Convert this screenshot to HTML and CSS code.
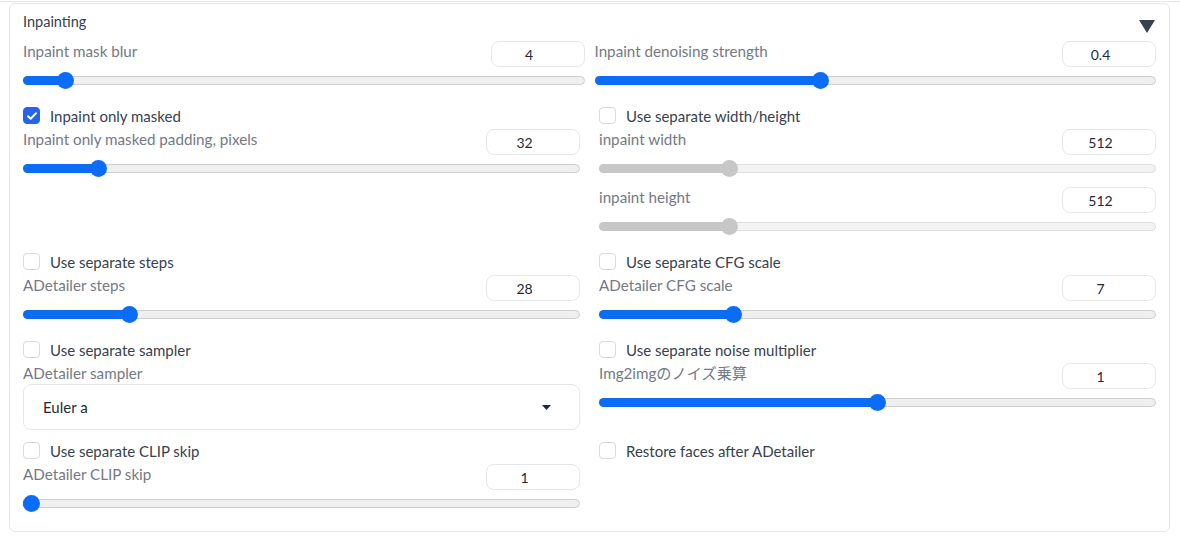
FILE: index.html
```html
<!DOCTYPE html>
<html lang="en">
<head>
<meta charset="utf-8">
<title>Inpainting</title>
<link rel="stylesheet" href="styles.css">
</head>
<body>
<div class="topline"></div>
<section class="panel">
  <div class="header">
    <span class="title">Inpainting</span>
    <svg class="collapse" width="16" height="13" viewBox="0 0 16 13"><polygon points="0,0 16,0 8,13" fill="#374151"/></svg>
  </div>

  <div class="row row-tight">
    <div class="col">
      <div class="slider-block">
        <div class="slider-head"><span class="label">Inpaint mask blur</span><span class="num">4</span></div>
        <div class="range"><div class="track"><div class="fill" style="width:calc(8px + 0.0625 * (100% - 16px))"></div><div class="thumb" style="left:calc(8px + 0.0625 * (100% - 16px))"></div></div></div>
      </div>
    </div>
    <div class="col">
      <div class="slider-block">
        <div class="slider-head"><span class="label">Inpaint denoising strength</span><span class="num">0.4</span></div>
        <div class="range"><div class="track"><div class="fill" style="width:calc(8px + 0.4 * (100% - 16px))"></div><div class="thumb" style="left:calc(8px + 0.4 * (100% - 16px))"></div></div></div>
      </div>
    </div>
  </div>

  <div class="row">
    <div class="col">
      <label class="check"><span class="box checked"><svg width="10" height="8" viewBox="0 0 10 8"><path d="M1 4.2 L3.7 6.8 L9 1.3" fill="none" stroke="#fff" stroke-width="2" stroke-linecap="round" stroke-linejoin="round"/></svg></span><span class="check-text">Inpaint only masked</span></label>
      <div class="slider-block">
        <div class="slider-head"><span class="label">Inpaint only masked padding, pixels</span><span class="num">32</span></div>
        <div class="range"><div class="track"><div class="fill" style="width:calc(8px + 0.125 * (100% - 16px))"></div><div class="thumb" style="left:calc(8px + 0.125 * (100% - 16px))"></div></div></div>
      </div>
    </div>
    <div class="col">
      <label class="check"><span class="box"></span><span class="check-text">Use separate width/height</span></label>
      <div class="slider-block">
        <div class="slider-head"><span class="label">inpaint width</span><span class="num">512</span></div>
        <div class="range disabled"><div class="track"><div class="fill" style="width:calc(8px + 0.2258 * (100% - 16px))"></div><div class="thumb" style="left:calc(8px + 0.2258 * (100% - 16px))"></div></div></div>
      </div>
      <div class="slider-block">
        <div class="slider-head"><span class="label">inpaint height</span><span class="num">512</span></div>
        <div class="range disabled"><div class="track"><div class="fill" style="width:calc(8px + 0.2258 * (100% - 16px))"></div><div class="thumb" style="left:calc(8px + 0.2258 * (100% - 16px))"></div></div></div>
      </div>
    </div>
  </div>

  <div class="row">
    <div class="col">
      <label class="check"><span class="box"></span><span class="check-text">Use separate steps</span></label>
      <div class="slider-block">
        <div class="slider-head"><span class="label">ADetailer steps</span><span class="num">28</span></div>
        <div class="range"><div class="track"><div class="fill" style="width:calc(8px + 0.1812 * (100% - 16px))"></div><div class="thumb" style="left:calc(8px + 0.1812 * (100% - 16px))"></div></div></div>
      </div>
    </div>
    <div class="col">
      <label class="check"><span class="box"></span><span class="check-text">Use separate CFG scale</span></label>
      <div class="slider-block">
        <div class="slider-head"><span class="label">ADetailer CFG scale</span><span class="num">7</span></div>
        <div class="range"><div class="track"><div class="fill" style="width:calc(8px + 0.2333 * (100% - 16px))"></div><div class="thumb" style="left:calc(8px + 0.2333 * (100% - 16px))"></div></div></div>
      </div>
    </div>
  </div>

  <div class="row">
    <div class="col">
      <label class="check"><span class="box"></span><span class="check-text">Use separate sampler</span></label>
      <div class="dropdown-block">
        <span class="label">ADetailer sampler</span>
        <div class="dropdown"><span class="dd-value">Euler a</span><svg width="9" height="5" viewBox="0 0 9 5"><polygon points="0,0 9,0 4.5,5" fill="#1f2937"/></svg></div>
      </div>
    </div>
    <div class="col">
      <label class="check"><span class="box"></span><span class="check-text">Use separate noise multiplier</span></label>
      <div class="slider-block">
        <div class="slider-head"><span class="label">Img2imgのノイズ乗算</span><span class="num">1</span></div>
        <div class="range"><div class="track"><div class="fill" style="width:calc(8px + 0.5 * (100% - 16px))"></div><div class="thumb" style="left:calc(8px + 0.5 * (100% - 16px))"></div></div></div>
      </div>
    </div>
  </div>

  <div class="row">
    <div class="col">
      <label class="check"><span class="box"></span><span class="check-text">Use separate CLIP skip</span></label>
      <div class="slider-block">
        <div class="slider-head"><span class="label">ADetailer CLIP skip</span><span class="num">1</span></div>
        <div class="range"><div class="track"><div class="fill" style="width:8px"></div><div class="thumb" style="left:8px"></div></div></div>
      </div>
    </div>
    <div class="col">
      <label class="check"><span class="box"></span><span class="check-text">Restore faces after ADetailer</span></label>
    </div>
  </div>
</section>
</body>
</html>
```
FILE: styles.css
```css
* { box-sizing: border-box; }
html, body { margin: 0; padding: 0; background: #fff; }
body {
  font-family: Lato, "Noto Sans CJK JP", sans-serif;
  width: 1180px;
  height: 542px;
  overflow: hidden;
}
.topline {
  height: 2px;
  border-bottom: 1px solid #e5e7eb;
  margin-bottom: 1px;
}
.panel {
  margin-left: 9px;
  width: 1161px;
  border: 1px solid #e5e7eb;
  border-radius: 6px;
  padding: 7px 13px 13px;
  display: flex;
  flex-direction: column;
  gap: 13px;
}
.header {
  height: 17px;
  display: flex;
  justify-content: space-between;
  align-items: flex-start;
}
.title {
  font-size: 14.5px;
  line-height: 20px;
  margin-top: 1px;
  color: #374151;
}
.collapse { margin-top: 9px; margin-right: 1px; }
.row {
  display: grid;
  grid-template-columns: 1fr 1fr;
  column-gap: 19px;
}
.row-tight { column-gap: 10px; }
.col {
  display: flex;
  flex-direction: column;
  gap: 4px;
}
.check {
  display: flex;
  align-items: center;
  height: 17px;
  margin-top: -1px;
  margin-bottom: 1px;
}
.box {
  width: 17px;
  height: 17px;
  border: 1px solid #d6d9de;
  border-radius: 4px;
  background: #fff;
  display: flex;
  align-items: center;
  justify-content: center;
  flex: none;
}
.box.checked {
  background: #2563eb;
  border-color: #2563eb;
}
.check-text {
  margin-left: 10px;
  font-size: 15px;
  line-height: 20px;
  color: #374151;
}
.slider-block {
  height: 54px;
  display: flex;
  flex-direction: column;
}
.slider-head {
  display: flex;
  justify-content: space-between;
  align-items: flex-start;
  height: 26px;
}
.label {
  font-size: 15.2px;
  line-height: 20px;
  color: #737985;
}
.num {
  width: 94px;
  height: 26px;
  border: 1px solid #e5e7eb;
  border-radius: 8px;
  font-size: 14px;
  line-height: 25px;
  text-align: center;
  padding-right: 17px;
  color: #1f2937;
}
.range {
  margin-top: 3px;
  height: 20px;
  display: flex;
  align-items: center;
}
.track {
  position: relative;
  width: 100%;
  height: 9px;
  border-radius: 5px;
  background: #efefef;
  border: 1px solid #cfcfcf;
}
.fill {
  position: absolute;
  left: -1px;
  top: -1px;
  bottom: -1px;
  border-radius: 5px;
  background: #0b6cf6;
}
.thumb {
  position: absolute;
  top: 50%;
  width: 17px;
  height: 17px;
  margin-left: -9px;
  margin-top: -8.5px;
  border-radius: 50%;
  background: #0b6cf6;
}
.range.disabled .fill { background: #c7c7c7; }
.range.disabled .thumb { background: #c7c7c7; }
.range.disabled .track { border-color: #dedede; background: #f3f3f3; }
.dropdown-block {
  display: flex;
  flex-direction: column;
}
.dropdown {
  margin-top: 1px;
  height: 46px;
  border: 1px solid #e5e7eb;
  border-radius: 8px;
  display: flex;
  align-items: center;
  justify-content: space-between;
  padding: 0 28px 0 19px;
}
.dd-value {
  font-size: 15px;
  color: #1f2937;
}
```
